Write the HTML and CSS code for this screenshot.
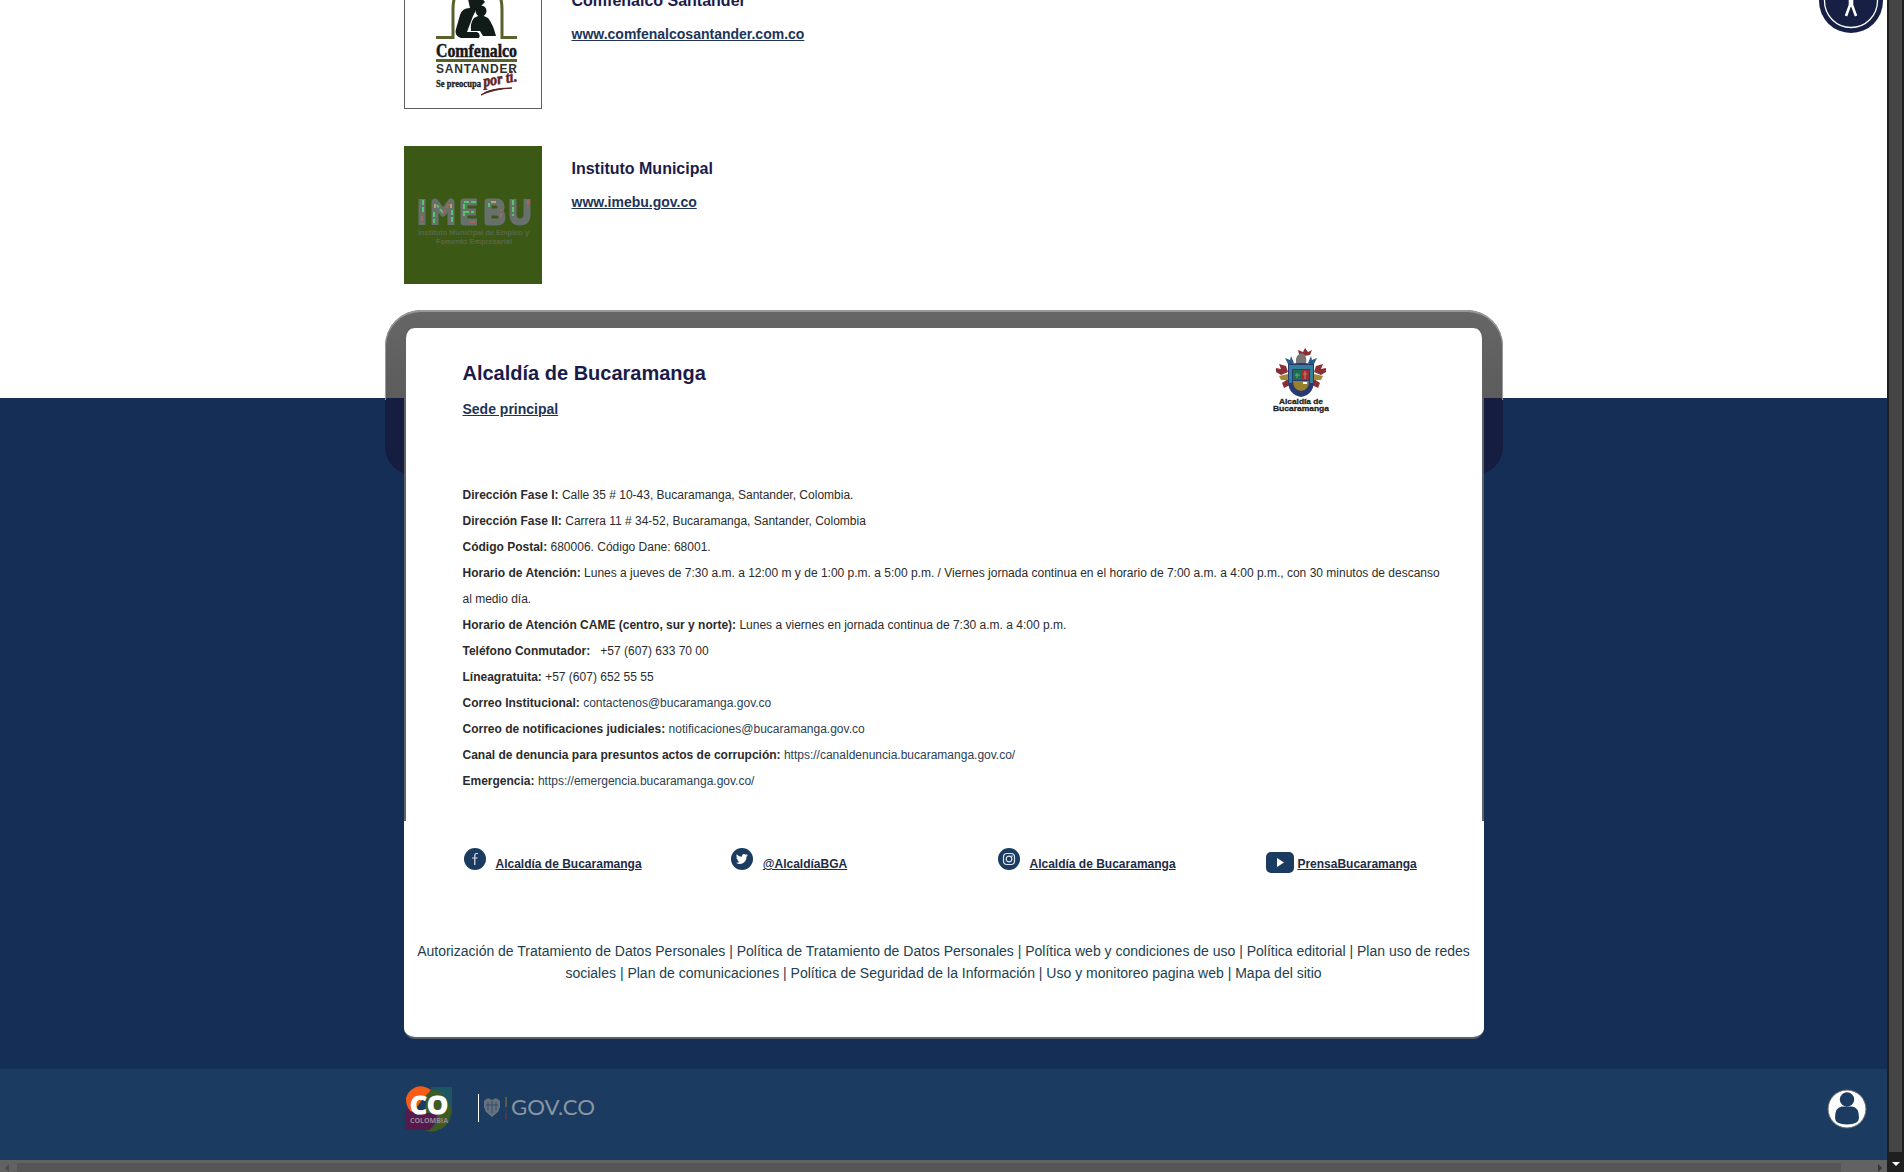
FILE: index.html
```html
<!DOCTYPE html>
<html lang="es">
<head>
<meta charset="utf-8">
<title>Alcaldía de Bucaramanga</title>
<link rel="stylesheet" href="styles.css">
</head>
<body>
<div class="window">
  <div class="page">
    <main class="entities">
      <article class="entity">
        <svg class="entity-logo bordered" viewBox="0 0 138 138">
          <g fill="none" stroke="#59612c" stroke-width="3"><path d="M32 66.500H49V38Q49 12 73 12Q98 12 98 38V66.500H113M32 89.500H113"/></g>
          <path d="M64 28Q74 22 81 31L76 36L72 39L69 45L63 61H73Q77 63 75 67H57Q50 65 52 58L56 44Q58 37 66 37Z" fill="#111b17"/>
          <circle cx="77" cy="40" r="5.500" fill="#111b17"/>
          <path d="M70 47Q77 42 84 47Q89 53 92 65H79L76 60H67Q66 52 70 47Z" fill="#111b17"/>
          <text x="32" y="85.500" class="comf-name" textLength="81" lengthAdjust="spacingAndGlyphs">Comfenalco</text>
          <text x="32" y="101.500" class="comf-place" textLength="81" lengthAdjust="spacing">SANTANDER</text>
          <text x="32" y="115.500" class="comf-motto" textLength="45" lengthAdjust="spacingAndGlyphs">Se preocupa</text>
          <text x="80" y="115.500" class="comf-you" transform="rotate(-9 80 115.500)" textLength="34" lengthAdjust="spacingAndGlyphs">por ti.</text>
          <path d="M77 124Q85 117 108 117Q90 118 77 124Z" fill="#5a2020" stroke="#5a2020"/>
        </svg>
        <div class="entity-text"><h2>Comfenalco Santander</h2><a>www.comfenalcosantander.com.co</a></div>
      </article>
      <article class="entity">
        <svg class="entity-logo" viewBox="0 0 138 138">
          <path fill="#3c5815" d="M0 0H138V138H0Z"/>
          <g fill="none" stroke="#67706a" stroke-width="7" stroke-linejoin="round">
            <path d="M18 53V79M31 79V56L39 67L47 56V79M73 56H60V76H73M60 66H72M84 56H92Q97 56 97 61Q97 66 92 66H84V56V76H93Q98 76 98 71Q98 66 92 66M109 53V68Q109 76 116 76Q123 76 123 68V53"/>
          </g>
          <g fill="none" stroke-width="2" stroke-dasharray="5 2">
            <path stroke="#55c76b" d="M19 54V66M30 66V77M39 67L33 59M48 64V77M60 70V56H72M85 57V61M109 54V70M60 66H70"/>
            <path stroke="#a8655c" d="M18 70V78M45 58L39 67M66 76H72M97 72V63M124 54V62"/>
            <path stroke="#b3a85d" d="M31 58V62M47 58V62M87 56H92"/>
          </g>
          <text x="14" y="89" class="imebu-sub" textLength="111" lengthAdjust="spacingAndGlyphs">Instituto Municipal de Empleo y</text>
          <text x="32" y="98" class="imebu-sub" textLength="76" lengthAdjust="spacingAndGlyphs">Fomento Empresarial</text>
        </svg>
        <div class="entity-text"><h2>Instituto Municipal</h2><a>www.imebu.gov.co</a></div>
      </article>
    </main>
    <footer class="footer">
      <div class="backplate"></div>
      <div class="card">
        <section class="card-body">
          <header class="card-head">
            <div><h1>Alcaldía de Bucaramanga</h1><a class="seat">Sede principal</a></div>
            <svg class="crest" viewBox="0 0 56 66">
              <g fill="#8b2e36"><path d="M25 3L30 5L32 1L35 5L39 3L37 8L31 9L26 7ZM3 21L8 22L6 17L13 19L15 25L8 28L3 25ZM53 21L48 22L50 17L43 19L41 25L48 28L53 25ZM9 36L15 32L17 38L11 41ZM47 36L41 32L39 38L45 41Z"/></g>
              <g fill="#285d8b"><path d="M12 11L17 13L18 9L21 16L16 19ZM44 11L39 13L38 9L35 16L40 19Z"/></g>
              <g fill="#a08a32"><path d="M6 29L15 27L16 33L8 33ZM50 29L41 27L40 33L48 33Z"/></g>
              <path d="M23 15Q22 8 29 6Q35 9 33 17H23Z" fill="#777779"/>
              <path d="M15 17Q28 15 41 17V35Q40 48 28 50Q16 48 15 35Z" fill="#293a72"/>
              <path d="M16 18H40V22H16ZM16 22H19V36H16ZM37 22H40V36H37Z" fill="#347d9b"/>
              <path d="M20 23H28V33H20Z" fill="#1d6d50"/><path d="M28 23H36V33H28Z" fill="#9c2e39"/>
              <path d="M20 34H36Q36 43 28 44Q20 43 20 34Z" fill="#98802e"/>
              <path d="M30 35h4v2h-4z" fill="#fff"/><path d="M24 26v5M22 28h5" stroke="#75aa77"/><path d="M32 24v8M30 27h4" stroke="#ca8650"/>
              <text x="6" y="57" textLength="44" lengthAdjust="spacingAndGlyphs">Alcaldía de</text>
              <text x="0" y="64" textLength="56" lengthAdjust="spacingAndGlyphs">Bucaramanga</text>
            </svg>
          </header>
          <div class="contact">
            <p><b>Dirección Fase I:</b> Calle 35 # 10-43, Bucaramanga, Santander, Colombia.</p>
            <p><b>Dirección Fase II:</b> Carrera 11 # 34-52, Bucaramanga, Santander, Colombia</p>
            <p><b>Código Postal:</b> 680006. Código Dane: 68001.</p>
            <p><b>Horario de Atención:</b> Lunes a jueves de 7:30 a.m. a 12:00 m y de 1:00 p.m. a 5:00 p.m. / Viernes jornada continua en el horario de 7:00 a.m. a 4:00 p.m., con 30 minutos de descanso<br>al medio día.</p>
            <p><b>Horario de Atención CAME (centro, sur y norte):</b> Lunes a viernes en jornada continua de 7:30 a.m. a 4:00 p.m.</p>
            <p><b>Teléfono Conmutador:</b> &nbsp; +57 (607) 633 70 00</p>
            <p><b>Líneagratuita:</b> +57 (607) 652 55 55</p>
            <p><b>Correo Institucional:</b> <a>contactenos@bucaramanga.gov.co</a></p>
            <p><b>Correo de notificaciones judiciales:</b> <a>notificaciones@bucaramanga.gov.co</a></p>
            <p><b>Canal de denuncia para presuntos actos de corrupción:</b> <a>https://canaldenuncia.bucaramanga.gov.co/</a></p>
            <p><b>Emergencia:</b> <a>https://emergencia.bucaramanga.gov.co/</a></p>
          </div>
        </section>
        <section class="card-foot">
          <nav class="social">
            <div><svg class="round" viewBox="0 0 22 22"><circle cx="11" cy="11" r="11"/><path class="line" d="M14 5.500H12.500Q10.800 5.500 10.800 7.500V17M8 10H13.500"/></svg><a>Alcaldía de Bucaramanga</a></div>
            <div><svg class="round" viewBox="0 0 22 22"><circle cx="11" cy="11" r="11"/><path class="white" d="M17 7L15.500 7.500L16.500 6L14.700 6.700C13 5 10.500 6.200 11 8.800C8.600 8.700 7 7.500 5.800 6.200C5 7.700 5.500 9 6.500 9.800L5.400 9.500C5.500 11 6.500 11.800 7.500 12.200H6.500C7 13.300 7.800 13.700 8.900 13.800C7.800 14.600 6.600 14.900 5 14.800C9.500 17.700 15.500 15 15.500 8.800Z"/></svg><a>@AlcaldíaBGA</a></div>
            <div><svg class="round" viewBox="0 0 22 22"><circle cx="11" cy="11" r="11"/><rect class="line" x="5.500" y="5.500" width="11" height="11" rx="3.500"/><circle class="line" cx="11" cy="11" r="2.800"/><circle class="white" cx="14" cy="8" r=".7"/></svg><a>Alcaldía de Bucaramanga</a></div>
            <div><svg class="tube" viewBox="0 0 28 21"><rect width="28" height="21" rx="5"/><path class="white" d="M11 6L18 10.500L11 15Z"/></svg><a>PrensaBucaramanga</a></div>
          </nav>
          <p class="policies">Autorización de Tratamiento de Datos Personales | Política de Tratamiento de Datos Personales | Política web y condiciones de uso | Política editorial | Plan uso de redes<br>sociales | Plan de comunicaciones | Política de Seguridad de la Información | Uso y monitoreo pagina web | Mapa del sitio</p>
        </section>
      </div>
    </footer>
    <div class="gov">
      <svg class="co" viewBox="0 0 48 48">
        <path d="M26 2H47V30H26Z" fill="#1c5665"/><path d="M0 24H30V45H0Z" fill="#571a4c"/>
        <path d="M22 8Q30 2 36 8L46 22Q48 44 26 47L18 44Z" fill="#3c5b25"/><path d="M0 28H32Q32 40 24 45H0Z" fill="#571a4c"/>
        <path d="M5 26Q-3 14 5 6Q14 -3 26 5L18 14L8 27Z" fill="#f65c16"/>
        <text x="5" y="28.500" class="co-big" textLength="38" lengthAdjust="spacingAndGlyphs">CO</text>
        <text x="5" y="37.500" class="co-small" textLength="38" lengthAdjust="spacingAndGlyphs">COLOMBIA</text>
      </svg>
      <svg class="govco" viewBox="0 0 120 30">
        <path d="M.5 1V29" stroke="#fff" stroke-width="1"/>
        <path d="M6 8L10 5L14 7L18 5L22 8V14L20 19L14 24L8 19L6 14Z" fill="#65717e"/>
        <path d="M10 9V17M14 8V20M18 9V17M8 12H20" stroke="#334d6a" fill="none"/>
        <path d="M28 4V14" stroke="#555f44" stroke-width="2"/><path d="M28 14V20" stroke="#314563"/><path d="M28 20V26" stroke="#563252" stroke-width="2"/>
        <text x="33" y="22" textLength="84" lengthAdjust="spacingAndGlyphs">GOV.CO</text>
      </svg>
      <svg class="user" viewBox="0 0 40 40"><circle cx="20" cy="20" r="19" fill="#fff" stroke="#656668"/><circle cx="20" cy="10.500" r="7.200"/><path d="M8 29Q8 18 15 17.500H25Q32 18 32 29Q32 35 20 35.500Q8 35 8 29Z"/></svg>
    </div>
    <svg class="access" viewBox="0 0 64 64"><circle cx="32" cy="32" r="32" fill="#172044"/><circle cx="32" cy="32" r="26.500" fill="none" stroke="#fff" stroke-width="1.300"/><circle cx="32" cy="14" r="4" fill="#fff"/><path d="M20 22L32 25L44 22M32 25V34M27 47L31 36V28H33V36L37 47" stroke="#fff" stroke-width="2.600" fill="none"/></svg>
  </div>
  <div class="vbar"><div class="vthumb"></div><i class="down"></i></div>
  <div class="hbar"><i class="left"></i><div class="hthumb"></div><i class="right"></i></div>
</div>
</body>
</html>
```
FILE: styles.css
```css
* { box-sizing: border-box; }
body, h1, h2, p { margin: 0; }
body { font-family: "Liberation Sans", Arial, sans-serif; background: #fff; overflow: hidden; }
svg { display: block; flex: none; }
.window { display: grid; grid-template: 1160px 12px / 1887px 17px; height: 1172px; }
.page { position: relative; overflow: hidden; display: flex; flex-direction: column; }

.entities { height: 310px; padding-left: 404px; flex: none; overflow: hidden; }
.entity { display: flex; gap: 29.500px; height: 138px; margin-bottom: 37px; }
.entity:first-child { margin-top: -29px; }
.entity:first-child .entity-text { padding-top: 20px; }
.entity-logo { width: 138px; height: 138px; }
.bordered { outline: 1px solid #606060; outline-offset: -1px; }
.entity-text { padding-top: 13px; color: #1b1b4a; }
.entity h2 { font-size: 16px; line-height: 20px; }
.entity a { display: block; margin-top: 14px; font-size: 14px; line-height: 18px; font-weight: bold; text-decoration: underline; color: #1d3458; }
.comf-name { font: bold 19px "Liberation Serif", serif; fill: #171717; stroke: #171717; stroke-width: .5px; }
.comf-place { font: bold 12px "Liberation Sans", sans-serif; fill: #30302c; }
.comf-motto { font: bold 10px "Liberation Serif", serif; fill: #202020; stroke: #202020; stroke-width: .3px; }
.comf-you { font: italic bold 16px "Liberation Serif", serif; fill: #642323; stroke: #642323; stroke-width: .6px; }
.imebu-sub { font: bold 7px "Liberation Sans", sans-serif; fill: #596647; }

.footer { position: relative; height: 759px; flex: none; padding: 18px 403px 0 404px; background: linear-gradient(#fff 88px, #152e55 88px); }
.backplate { position: absolute; left: 385px; top: 0; width: 1118px; height: 165px; border-radius: 36px 36px 28px 28px; background: linear-gradient(#666 2px, #5c5c5c 88px, #151d40 88px); overflow: hidden; }
.backplate::before { content: ""; display: block; height: 88px; border: 1px solid #999; border-width: 2px 1px 0; border-radius: 36px 36px 0 0; }
.card { position: relative; width: 1080px; height: 711px; border-bottom: 2px solid #5b6067; border-radius: 0 0 11px 11px; overflow: hidden; }
.card-body { height: 493px; border: solid #606163; border-width: 0 2px; border-radius: 10px 10px 0 0; background: #fff; padding: 0 40px 0 56.500px; }
.card-head { height: 154px; display: flex; justify-content: space-between; padding-top: 32px; }
h1 { font-size: 20px; line-height: 26px; color: #1b1b4a; }
.seat { display: block; margin-top: 14px; font-size: 14px; line-height: 18px; font-weight: bold; text-decoration: underline; color: #1d3458; }
.crest { width: 56px; height: 66px; margin: -13px 113px 0 0; }
.crest text { font: bold 8px "Liberation Sans", sans-serif; fill: #242424; stroke: #242424; stroke-width: .3px; }
.contact { font-size: 12px; line-height: 26px; color: #2b2b2b; white-space: nowrap; }
.contact a { color: #2b4054; }
.card-foot { height: 216px; background: #fff; padding-top: 27px; }
.social { display: grid; grid-template-columns: repeat(4, 267.300px); padding-left: 60px; height: 91px; font-size: 12px; font-weight: bold; color: #1d2c45; }
.social div { display: flex; align-items: flex-start; gap: 9.500px; }
.social a { text-decoration: underline; line-height: 16px; margin-top: 8px; }
.social svg { fill: #1c3b60; }
.social div:nth-child(3) svg { margin-left: -.600px; }
.round { width: 22px; height: 22px; }
.tube { width: 28px; height: 21px; margin-top: 4px; }
.social .tube + a { margin-left: -6px; }
.social .line { fill: none; stroke: #dfe4ea; stroke-width: 1.200px; }
.social .white { fill: #fff; }
.policies { text-align: center; font-size: 14px; line-height: 22px; margin: 1px 1px 0 0; color: #22404f; white-space: nowrap; }

.gov { height: 91px; flex: none; display: flex; align-items: flex-start; background: #1c3b60; padding: 16px 20px 0 405px; }
.co { width: 48px; height: 48px; }
.co-big { font: bold 25px "Open Sans", sans-serif; fill: #fff; stroke: #fff; stroke-width: 1.200px; }
.co-small { font: bold 7px "Open Sans", sans-serif; fill: #99869b; }
.govco { width: 120px; height: 30px; margin: 8px auto 0 25px; }
.govco text { font: 21px Lato, sans-serif; fill: #8995a3; }
.user { width: 40px; height: 40px; margin-top: 4px; fill: #1c3b60; }
.access { position: absolute; left: 1819px; top: -31px; width: 64px; height: 64px; }

.vbar { grid-area: 1 / 2 / 3 / 3; background: #1f1f1f; display: flex; flex-direction: column; align-items: center; }
.vthumb { width: 13px; height: 1152px; background: #454545; }
.down { margin-top: 10px; border: 4px solid transparent; border-top-color: #fff; border-bottom: 0; }
.hbar { grid-area: 2 / 1; display: flex; align-items: center; background: #626262; padding: 3px 5px 0; }
.left, .right { border: 4px solid transparent; }
.left { border-right-color: #4c4c4c; border-left: 0; margin-right: 8px; }
.right { border-left-color: #333; border-right: 0; margin-left: auto; }
.hthumb { width: 1824px; height: 9px; background: #565656; }
```
